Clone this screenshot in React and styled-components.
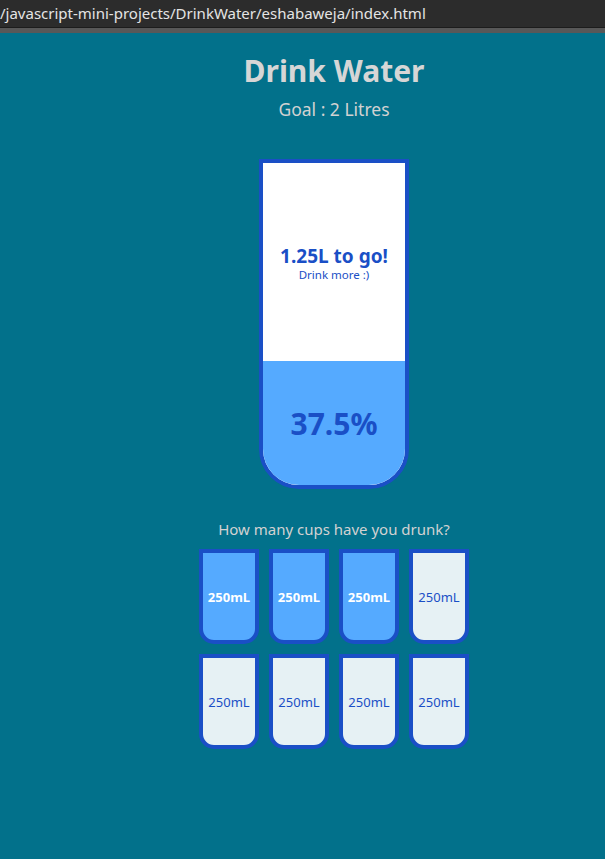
import React from 'react';
import styled, { createGlobalStyle } from 'styled-components';

const GlobalStyle = createGlobalStyle`
  * { box-sizing: border-box; }
  html, body { margin: 0; padding: 0; }
  body {
    background-color: #02718b;
    font-family: 'Noto Sans', 'Open Sans', sans-serif;
    overflow: hidden;
  }
`;

const BORDER = '#1a4fc6';
const FILL = '#55aaff';

const cups = [true, true, true, false, false, false, false, false];
const full = cups.filter(Boolean).length;
const total = cups.length;

const App = () => {
  const pct = (full / total) * 100;
  const left = (2 - (full * 250) / 1000).toFixed(2).replace(/0$/, '');
  return (
    <>
      <GlobalStyle />
      <Chrome>
        <UrlBar>/javascript-mini-projects/DrinkWater/eshabaweja/index.html</UrlBar>
        <ChromeEdge />
      </Chrome>
      <Page>
        <Title>Drink Water</Title>
        <Goal>Goal : 2 Litres</Goal>
        <Cup>
          <Remained>
            <Liters>{left}L to go!</Liters>
            <Hint>Drink more :)</Hint>
          </Remained>
          <Percentage style={{ height: `${(full / total) * 330}px` }}>{pct}%</Percentage>
        </Cup>
        <Question>How many cups have you drunk?</Question>
        <Cups>
          {cups.map((isFull, i) => (
            <SmallCup key={i} $full={isFull}>250mL</SmallCup>
          ))}
        </Cups>
      </Page>
    </>
  );
};

const Chrome = styled.div`
  display: flex;
  flex-direction: column;
`;

const UrlBar = styled.div`
  height: 28px;
  background: #2c2c2c;
  border-bottom: 1px solid #1c1c1c;
  color: #e4e4e4;
  font-size: 15px;
  line-height: 26px;
  white-space: nowrap;
  overflow: hidden;
`;

const ChromeEdge = styled.div`
  height: 5px;
  background: #585858;
`;

const Page = styled.div`
  display: flex;
  flex-direction: column;
  align-items: center;
  padding-left: 63px;
`;

const Title = styled.h1`
  margin: 18px 0 0;
  font-size: 30px;
  font-weight: 700;
  color: #d6d6d6;
  line-height: 40px;
`;

const Goal = styled.h3`
  margin: 7px 0 9px;
  font-size: 17.5px;
  font-weight: 400;
  color: #d2d2d2;
  line-height: 22px;
`;

const Cup = styled.div`
  background-color: #fff;
  border: 4px solid ${BORDER};
  color: ${BORDER};
  border-radius: 0 0 40px 40px;
  height: 330px;
  width: 150px;
  margin: 30px 0;
  display: flex;
  flex-direction: column;
  overflow: hidden;
`;

const Remained = styled.div`
  flex: 1;
  display: flex;
  flex-direction: column;
  align-items: center;
  justify-content: center;
  text-align: center;
  padding-top: 2px;
`;

const Liters = styled.span`
  font-size: 19px;
  font-weight: 700;
  line-height: 23px;
`;

const Hint = styled.small`
  font-size: 11.5px;
  line-height: 13px;
`;

const Percentage = styled.div`
  background-color: ${FILL};
  display: flex;
  align-items: center;
  justify-content: center;
  font-weight: 700;
  font-size: 30px;
`;

const Question = styled.p`
  margin: 0 0 5px;
  font-size: 15px;
  color: #d2d2d2;
  line-height: 20px;
`;

const Cups = styled.div`
  display: flex;
  flex-wrap: wrap;
  justify-content: center;
  width: 280px;
`;

const SmallCup = styled.div`
  height: 95px;
  width: 60px;
  margin: 5px;
  border: 4px solid ${BORDER};
  border-radius: 0 0 15px 15px;
  background-color: ${(p) => (p.$full ? FILL : 'rgba(255, 255, 255, 0.9)')};
  color: ${(p) => (p.$full ? '#fff' : BORDER)};
  font-weight: ${(p) => (p.$full ? 700 : 400)};
  font-size: 13px;
  display: flex;
  align-items: center;
  justify-content: center;
  cursor: pointer;
`;

export default App;
